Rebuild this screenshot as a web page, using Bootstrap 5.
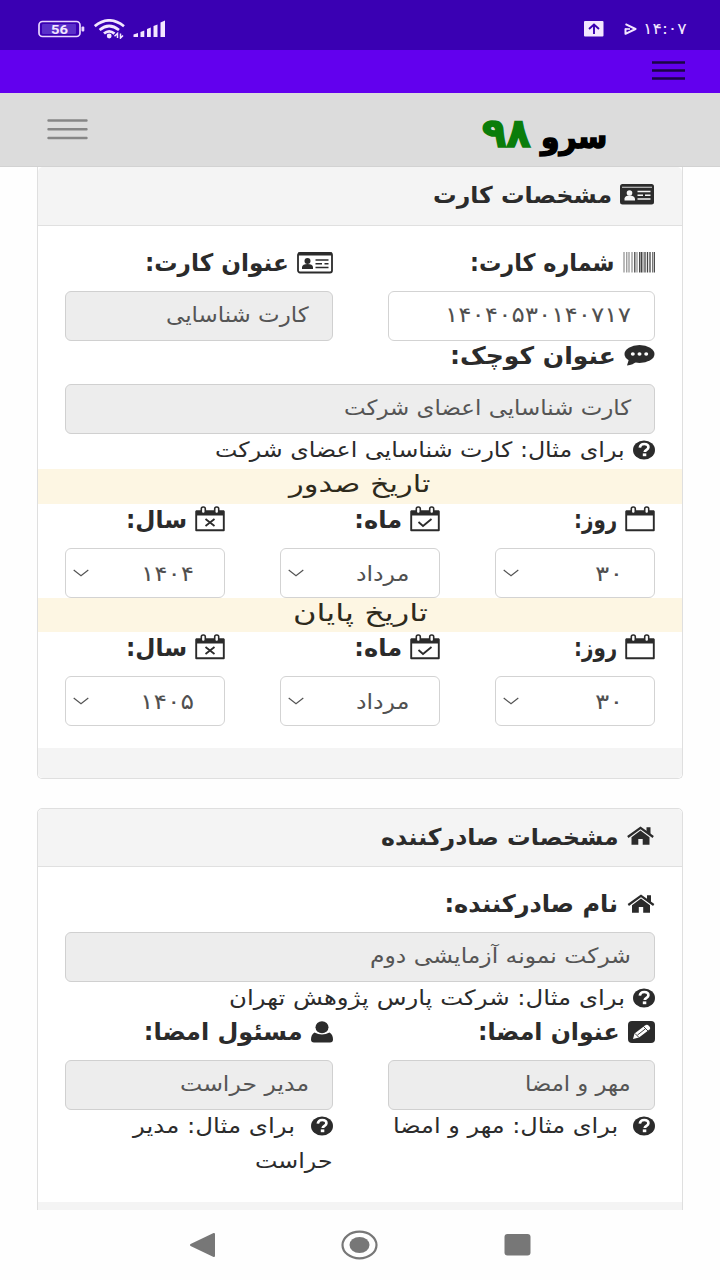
<!DOCTYPE html>
<html lang="fa" dir="rtl">
<head>
<meta charset="utf-8">
<meta name="viewport" content="width=device-width, initial-scale=1">
<title>سرو ۹۸</title>
<link href="https://cdn.jsdelivr.net/npm/bootstrap@5.3.0/dist/css/bootstrap.min.css" rel="stylesheet">
<style>
  body { font-family: "DejaVu Sans", sans-serif; color: #2b2b2b; background: #fefefe; height: 1280px; overflow: hidden; line-height: 35px; }
  svg { display: block; flex: none; }
  .fit { display: inline-block; white-space: nowrap; transform-origin: 100% 50%; }
  .statusbar { height: 50px; background: #3a00b3; color: #f3e6ff; padding: 7px 33px 0 38px; }
  .clock { font-size: 16px; }
  .ic-play { margin-right: 9px; }
  .ic-up { margin-right: 20px; }
  .ic-wifi { margin-left: 8px; }
  .ic-signal { margin-left: 7px; }
  .toolbar { height: 43px; background: #6200ee; padding: 0 34px 2px; }
  .brandbar { height: 74px; background: #dcdcdc; border-bottom: 1px solid #d2d2d2; padding: 0 113px 0 47px; }
  .brand-name { font-weight: bold; font-size: 32px; color: #000; -webkit-text-stroke: 1.5px #000; padding-top: 15px; }
  .brand-num { font-weight: bold; font-size: 40px; color: #0a7d0a; -webkit-text-stroke: 1.5px #0a7d0a; margin-right: 5px; padding-top: 7px; }
  .viewport { height: 1043px; overflow: hidden; padding: 0 37px; }
  .panel { border-color: #dfdfdf; border-radius: 5px; margin-bottom: 30px; background: #fff; }
  .panel-first { border-top: 0; border-top-left-radius: 0; border-top-right-radius: 0; margin-bottom: 29px; }
  .panel .card-header { height: 59px; padding: 10px 28px 14px; background: #f4f4f4; border-color: #e0e0e0; font-weight: 600; font-size: 23px; display: flex; align-items: center; line-height: 34px; }
  .panel .card-header .fit { padding-top: 2px; }
  .panel + .panel .card-header { height: 58px; padding-bottom: 13px; }
  .panel .card-body { padding: 22px 27px; }
  .panel .card-footer { height: 30px; background: #f4f4f4; border: 0; padding: 0; }
  .cols { display: grid; column-gap: 55px; }
  .cols-2 { grid-template-columns: 1fr 1fr; }
  .cols-3 { grid-template-columns: repeat(3, 1fr); }
  .lbl { font-weight: bold; font-size: 24px; height: 43px; padding-bottom: 14px; display: flex; align-items: center; }
  .lbl .fit { padding-top: 2px; }
  .box { height: 50px; border: 1.5px solid #d3d3d3; border-radius: 6px; background: #fff; color: #505050; font-size: 21px; line-height: 46px; padding: 0 23px; overflow: hidden; }
  .box.off { background: #ededed; color: #555; border-color: #d0d0d0; }
  .box.sel { display: flex; justify-content: space-between; align-items: center; padding: 0 30px 0 7px; }
  .box.sel .fit { padding-top: 2px; }
  .hint { font-size: 21px; display: flex; align-items: center; height: 35px; padding-bottom: 4px; }
  .hint .fit { padding-top: 2px; }
  .band { height: 35px; margin: 0 -27px; background: #fdf6e3; color: #2e2a1c; font-size: 24px; line-height: 31px; text-align: center; }
  .band-end { height: 34px; }
  .band .fit { transform-origin: 50% 50%; }
  .band + .cols .lbl { height: 44px; padding-bottom: 14px; }
  .navbar-keys { height: 70px; background: #fefefe; padding: 0 189px; }
</style>
</head>
<body>
<svg width="0" height="0" class="position-absolute">
  <defs>
    <symbol id="help" viewBox="0 0 22 20"><ellipse cx="11" cy="10" rx="11" ry="9.600" fill="#2b2b2b"/><path d="M6.800 7.600C7.200 5 9 4 11.200 4c2.500 0 4.200 1.300 4.200 3.200 0 2.600-3.500 2.500-3.700 4.800" fill="none" stroke="#fff" stroke-width="2.700"/><rect x="9.800" y="13.400" width="3.500" height="2.800" fill="#fff"/></symbol>
    <symbol id="cal" viewBox="0 0 30 26"><path d="M1.200 5.500H28.800V24.300H1.200Z" fill="none" stroke="#2b2b2b" stroke-width="1.900" stroke-linejoin="round"/><path d="M1 4.500H29V9.500H1Z" fill="#2b2b2b"/><rect x="6.300" y="1" width="4" height="6.500" rx="1.800" fill="#fff" stroke="#2b2b2b" stroke-width="1.600"/><rect x="19.700" y="1" width="4" height="6.500" rx="1.800" fill="#fff" stroke="#2b2b2b" stroke-width="1.600"/></symbol>
    <symbol id="home" viewBox="0 0 27 20"><path d="M.8 11 13.500 1.800 26.200 11" fill="none" stroke="#2b2b2b" stroke-width="2.200"/><path d="M19.500 1.200h4V9.500L19.500 6.500ZM4.500 11.300 13.500 4.600 22.500 11.300V18.800H15.700V13H11.300V18.800H4.500Z" fill="#2b2b2b"/></symbol>
    <symbol id="chev" viewBox="0 0 16 8"><path d="M.7 1 8 6.700 15.300 1" fill="none" stroke="#555" stroke-width="1.200"/></symbol>
  </defs>
</svg>

<header class="statusbar d-flex justify-content-between align-items-center">
  <div class="d-flex align-items-center">
    <span class="fit clock" data-w="44">۱۴:۰۷</span>
    <svg class="ic-play" width="14" height="12" viewBox="0 0 14 12"><path d="M1.500 1.200 11.500 6 1.500 10.800V5.500" fill="none" stroke="#f3e6ff" stroke-width="2" stroke-linejoin="round"/><path d="M1 6H6" stroke="#f3e6ff" stroke-width="1.600"/></svg>
    <svg class="ic-up" width="20" height="16" viewBox="0 0 20 16"><rect width="19.500" height="15.500" rx="1" fill="#f3e6ff"/><path d="M10 13V4M5 8 10 3.500 15 8" fill="none" stroke="#3a00b3" stroke-width="1.900"/></svg>
  </div>
  <div class="d-flex align-items-center" dir="ltr">
    <svg width="48" height="18" viewBox="0 0 48 18"><rect x="1" y="1.500" width="41" height="15" rx="3.500" fill="none" stroke="#e9d6ff" stroke-width="1.700"/><rect x="4" y="4" width="34" height="10" rx="1" fill="#5a30c8"/><rect x="43.500" y="6.500" width="2.800" height="5" rx="1" fill="#e9d6ff"/><text x="21.500" y="14" font-family="Roboto, sans-serif" font-size="13" font-weight="700" fill="#f3e6ff" text-anchor="middle" textLength="17" lengthAdjust="spacingAndGlyphs">56</text></svg>
    <svg class="ic-wifi" width="32" height="20" viewBox="0 0 32 20"><g fill="none" stroke="#f3e6ff" stroke-width="2.700"><path d="M.8 7.200Q15 -4.500 30 7.200"/><path d="M5.600 11Q15 3 25 11"/><path d="M10 14.600Q15 10 20.500 14.600"/></g><circle cx="15.200" cy="17" r="2.400" fill="#f3e6ff"/><path d="M20.500 17.200 23.500 14.500V19M26.500 14.500V19L29 16.500" stroke="#f3e6ff" stroke-width="1.500" fill="none"/></svg>
    <svg class="ic-signal" width="33" height="18" viewBox="0 0 33 18" fill="#f3e6ff"><path d="M.5 17V14.500L5 13V17ZM7.500 17V12L11.300 10.500V17ZM14 17V9L17.800 7.500V17ZM20.500 17V6L24.500 4.500V17ZM27.500 17V2.500L32 .5V17Z"/></svg>
  </div>
</header>

<div class="toolbar d-flex align-items-center">
  <svg width="35" height="20" viewBox="0 0 35 20"><path d="M1 1.600H34M1 9.600H34M1 17.600H34" stroke="#1a0545" stroke-width="2.500"/></svg>
</div>

<nav class="brandbar d-flex justify-content-between align-items-center">
  <div class="d-flex align-items-center">
    <span class="brand-name fit" data-w="66">سرو</span><span class="brand-num fit" data-w="49">۹۸</span>
  </div>
  <svg width="41" height="22" viewBox="0 0 41 22"><path d="M1.500 1.500H39.500M1.500 10.300H39.500M1.500 19H39.500" stroke="#868686" stroke-width="2.400" stroke-linecap="round"/></svg>
</nav>

<main class="viewport">
  <section class="card panel panel-first">
    <div class="card-header">
      <svg width="34" height="21" viewBox="0 0 34 21"><rect width="34" height="20.500" rx="2.500" fill="#2b2b2b"/><path d="M2 3.300H32" stroke="#bbb" stroke-width="1.200"/><circle cx="9.500" cy="9" r="2.800" fill="#f4f4f4"/><path d="M4.500 16.500V14.500Q5 11.500 9.500 11.500T15 14.500V16.500Z" fill="#f4f4f4"/><path d="M17.500 7.500H30.500M17.500 11.300H23M25 11.300H30.500M17.500 15H30.500" stroke="#f4f4f4" stroke-width="1.500"/></svg>
      <span class="fit" data-w="179" data-gap="8">مشخصات کارت</span>
    </div>
    <div class="card-body">
      <div class="cols cols-2">
        <div>
          <label class="lbl"><svg width="32" height="21" viewBox="0 0 32 21"><g stroke="#777"><path d="M1 0V20.500M3.800 0V20.500M6 0V20.500M9 0V20.500M14 0V20.500M20 0V20.500M29.500 0V20.500" stroke-width="1"/><path d="M11.800 0V20.500M16.700 0V20.500M22 0V20.500M24.500 0V20.500M27 0V20.500M31.300 0V20.500M18.500 0V20.500" stroke="#444" stroke-width="1.300"/></g></svg><span class="fit" data-w="145" data-gap="8">شماره کارت:</span></label>
          <div class="box"><span class="fit" data-w="186">۱۴۰۴۰۵۳۰۱۴۰۷۱۷</span></div>
        </div>
        <div>
          <label class="lbl"><svg width="36" height="22" viewBox="0 0 36 22"><rect x="1" y="1" width="34" height="19.500" rx="2" fill="none" stroke="#2b2b2b" stroke-width="1.800"/><path d="M1 2H35" stroke="#2b2b2b" stroke-width="3"/><circle cx="10.500" cy="9" r="3" fill="#2b2b2b"/><path d="M5 17V15Q5.500 12 10.500 12T16 15V17Z" fill="#2b2b2b"/><path d="M18.500 8H31.500M18.500 11.800H25M27.500 11.800H31.500M18.500 15.500H31.500" stroke="#2b2b2b" stroke-width="1.500"/></svg><span class="fit" data-w="144" data-gap="8">عنوان کارت:</span></label>
          <div class="box off"><span class="fit" data-w="143">کارت شناسایی</span></div>
        </div>
      </div>
      <label class="lbl"><svg width="31" height="21" viewBox="0 0 31 21"><ellipse cx="15.500" cy="9" rx="15" ry="9" fill="#2b2b2b"/><path d="M5 14 3 20.500Q9 20 13 16Z" fill="#2b2b2b"/><g fill="#fff"><ellipse cx="8.800" cy="9" rx="2" ry="1.700"/><ellipse cx="15.500" cy="9" rx="2" ry="1.700"/><ellipse cx="22.200" cy="9" rx="2" ry="1.700"/></g></svg><span class="fit" data-w="166" data-gap="8">عنوان کوچک:</span></label>
      <div class="box off"><span class="fit" data-w="287">کارت شناسایی اعضای شرکت</span></div>
      <div class="hint"><svg width="22" height="20"><use href="#help"/></svg><span class="fit" data-w="410" data-gap="8">برای مثال: کارت شناسایی اعضای شرکت</span></div>

      <div class="band"><span class="fit" data-w="142">تاریخ صدور</span></div>
      <div class="cols cols-3">
        <div>
          <label class="lbl"><svg width="30" height="26"><use href="#cal"/></svg><span class="fit" data-w="43" data-gap="8">روز:</span></label>
          <div class="box sel"><span class="fit" data-w="29">۳۰</span><svg width="16" height="8"><use href="#chev"/></svg></div>
        </div>
        <div>
          <label class="lbl"><svg width="30" height="26"><use href="#cal"/><path d="M8.500 16 13 20 21.500 13" fill="none" stroke="#2b2b2b" stroke-width="1.800"/></svg><span class="fit" data-w="48" data-gap="8">ماه:</span></label>
          <div class="box sel"><span class="fit" data-w="53">مرداد</span><svg width="16" height="8"><use href="#chev"/></svg></div>
        </div>
        <div>
          <label class="lbl"><svg width="30" height="26"><use href="#cal"/><path d="M10.500 13 19.500 20M19.500 13 10.500 20" fill="none" stroke="#2b2b2b" stroke-width="1.800"/></svg><span class="fit" data-w="61" data-gap="8">سال:</span></label>
          <div class="box sel"><span class="fit" data-w="53">۱۴۰۴</span><svg width="16" height="8"><use href="#chev"/></svg></div>
        </div>
      </div>

      <div class="band band-end"><span class="fit" data-w="135">تاریخ پایان</span></div>
      <div class="cols cols-3">
        <div>
          <label class="lbl"><svg width="30" height="26"><use href="#cal"/></svg><span class="fit" data-w="43" data-gap="8">روز:</span></label>
          <div class="box sel"><span class="fit" data-w="29">۳۰</span><svg width="16" height="8"><use href="#chev"/></svg></div>
        </div>
        <div>
          <label class="lbl"><svg width="30" height="26"><use href="#cal"/><path d="M8.500 16 13 20 21.500 13" fill="none" stroke="#2b2b2b" stroke-width="1.800"/></svg><span class="fit" data-w="48" data-gap="8">ماه:</span></label>
          <div class="box sel"><span class="fit" data-w="53">مرداد</span><svg width="16" height="8"><use href="#chev"/></svg></div>
        </div>
        <div>
          <label class="lbl"><svg width="30" height="26"><use href="#cal"/><path d="M10.500 13 19.500 20M19.500 13 10.500 20" fill="none" stroke="#2b2b2b" stroke-width="1.800"/></svg><span class="fit" data-w="61" data-gap="8">سال:</span></label>
          <div class="box sel"><span class="fit" data-w="54">۱۴۰۵</span><svg width="16" height="8"><use href="#chev"/></svg></div>
        </div>
      </div>
    </div>
    <div class="card-footer"></div>
  </section>

  <section class="card panel">
    <div class="card-header">
      <svg width="27" height="20"><use href="#home"/></svg>
      <span class="fit" data-w="238" data-gap="8">مشخصات صادرکننده</span>
    </div>
    <div class="card-body">
      <label class="lbl"><svg width="28" height="20"><use href="#home"/></svg><span class="fit" data-w="173" data-gap="9">نام صادرکننده:</span></label>
      <div class="box off"><span class="fit" data-w="261">شرکت نمونه آزمایشی دوم</span></div>
      <div class="hint"><svg width="22" height="20"><use href="#help"/></svg><span class="fit" data-w="396" data-gap="8">برای مثال: شرکت پارس پژوهش تهران</span></div>
      <div class="cols cols-2">
        <div>
          <label class="lbl"><svg width="27" height="22" viewBox="0 0 27 22"><rect width="27" height="22" rx="4" fill="#2b2b2b"/><path d="M5 18 6.500 12.500 17 4.500Q19 3 21 5T21.500 8.500L11 16.500Z" fill="#fff"/><path d="M15.500 5.500 20 10M7 12.500 11 16.500M9.500 14 17.500 7.800" stroke="#2b2b2b" stroke-width=".9" fill="none"/></svg><span class="fit" data-w="142" data-gap="8">عنوان امضا:</span></label>
          <div class="box off"><span class="fit" data-w="106">مهر و امضا</span></div>
          <div class="hint"><svg width="22" height="20"><use href="#help"/></svg><span class="fit" data-w="225" data-gap="15">برای مثال: مهر و امضا</span></div>
        </div>
        <div>
          <label class="lbl"><svg width="22" height="22" viewBox="0 0 22 22"><path d="M3.500 11.500Q0 13.500 0 18.500 0 21.500 3 21.500H19Q22 21.500 22 18.500 22 13.500 18.500 11.500 11 15.500 3.500 11.500Z" fill="#2b2b2b"/><ellipse cx="11" cy="6.200" rx="6.500" ry="6" fill="#2b2b2b"/></svg><span class="fit" data-w="159" data-gap="8">مسئول امضا:</span></label>
          <div class="box off"><span class="fit" data-w="129">مدیر حراست</span></div>
          <div class="hint"><svg width="22" height="20"><use href="#help"/></svg><span class="fit" data-w="162" data-gap="15">برای مثال: مدیر</span></div>
          <div class="hint"><span class="fit" data-w="78">حراست</span></div>
        </div>
      </div>
    </div>
    <div class="card-footer"></div>
  </section>
</main>

<footer class="navbar-keys d-flex justify-content-between align-items-center" dir="ltr">
  <svg width="27" height="26" viewBox="0 0 27 26"><path d="M2 13 25 2V24Z" fill="#777" stroke="#777" stroke-width="2" stroke-linejoin="round"/></svg>
  <svg width="38" height="30" viewBox="0 0 38 30"><ellipse cx="18.500" cy="15" rx="17" ry="13.400" fill="none" stroke="#777" stroke-width="2.200"/><ellipse cx="18.500" cy="15" rx="10" ry="8" fill="#777"/></svg>
  <svg width="27" height="22" viewBox="0 0 27 22"><rect x=".5" width="26" height="21.500" rx="3" fill="#777"/></svg>
</footer>

<script src="https://cdn.jsdelivr.net/npm/bootstrap@5.3.0/dist/js/bootstrap.bundle.min.js"></script>
<script>
  // Widen or narrow each label so that it fills its data-w width
  document.querySelectorAll('.fit').forEach(function (el) {
    if (el.dataset.gap) el.style.marginRight = el.dataset.gap + 'px';
    el.style.transform = 'scaleX(' + el.dataset.w / el.offsetWidth + ')';
  });
</script>
</body>
</html>
